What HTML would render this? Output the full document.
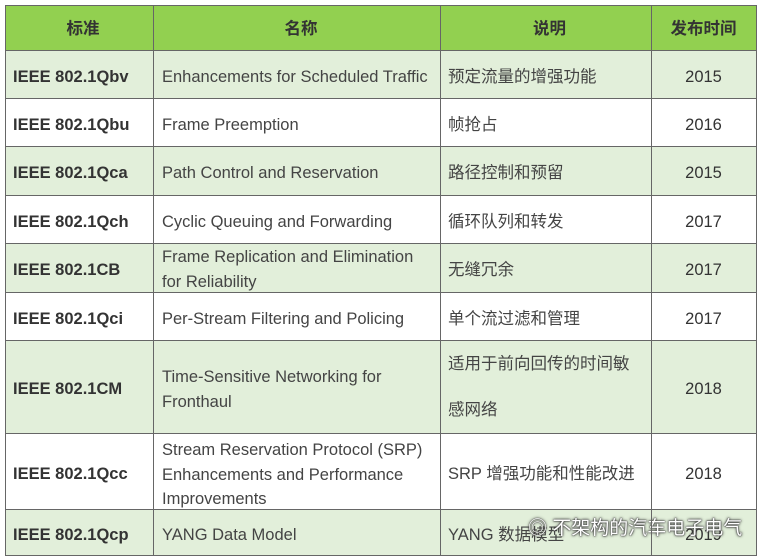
<!DOCTYPE html>
<html><head><meta charset="utf-8"><style>
html,body{margin:0;padding:0;background:#fff;width:760px;height:559px;overflow:hidden}
body{font-family:"Liberation Sans","Noto Sans CJK SC",sans-serif;position:relative}
.r{position:absolute;left:5px;width:751px}
.c{position:absolute;top:3px;bottom:-3px;display:flex;align-items:center;font-size:16.5px;color:#444;box-sizing:border-box;line-height:24.5px;white-space:nowrap}
.l{position:absolute;background:#666}
.h .c{font-weight:bold;color:#333;justify-content:center;top:2px;bottom:-2px}
.c1{left:0;width:148px;padding-left:8px;font-weight:bold;color:#333}
.c2{left:148px;width:287px;padding-left:9px}
.c3{left:435px;width:211px;padding-left:8px}
.c4{left:646px;width:105px;justify-content:center;color:#333}
.g{background:#e2efda}
</style></head><body>
<div class="r h" style="top:5px;height:45px;background:#92d050"><div class="c c1">标准</div><div class="c c2">名称</div><div class="c c3">说明</div><div class="c c4">发布时间</div></div>
<div class="r g" style="top:50px;height:48px"><div class="c c1">IEEE 802.1Qbv</div><div class="c c2">Enhancements for Scheduled Traffic</div><div class="c c3">预定流量的增强功能</div><div class="c c4">2015</div></div>
<div class="r" style="top:98px;height:48px"><div class="c c1">IEEE 802.1Qbu</div><div class="c c2">Frame Preemption</div><div class="c c3">帧抢占</div><div class="c c4">2016</div></div>
<div class="r g" style="top:146px;height:49px"><div class="c c1">IEEE 802.1Qca</div><div class="c c2">Path Control and Reservation</div><div class="c c3">路径控制和预留</div><div class="c c4">2015</div></div>
<div class="r" style="top:195px;height:48px"><div class="c c1">IEEE 802.1Qch</div><div class="c c2">Cyclic Queuing and Forwarding</div><div class="c c3">循环队列和转发</div><div class="c c4">2017</div></div>
<div class="r g" style="top:243px;height:49px"><div class="c c1">IEEE 802.1CB</div><div class="c c2" style="top:2px;bottom:-2px">Frame Replication and Elimination<br>for Reliability</div><div class="c c3">无缝冗余</div><div class="c c4">2017</div></div>
<div class="r" style="top:292px;height:48px"><div class="c c1">IEEE 802.1Qci</div><div class="c c2">Per-Stream Filtering and Policing</div><div class="c c3">单个流过滤和管理</div><div class="c c4">2017</div></div>
<div class="r g" style="top:340px;height:93px"><div class="c c1">IEEE 802.1CM</div><div class="c c2">Time-Sensitive Networking for<br>Fronthaul</div><div class="c c3" style="line-height:46px;top:0;bottom:0">适用于前向回传的时间敏<br>感网络</div><div class="c c4">2018</div></div>
<div class="r" style="top:433px;height:76px"><div class="c c1">IEEE 802.1Qcc</div><div class="c c2" style="top:4px;bottom:-4px">Stream Reservation Protocol (SRP)<br>Enhancements and Performance<br>Improvements</div><div class="c c3">SRP 增强功能和性能改进</div><div class="c c4">2018</div></div>
<div class="r g" style="top:509px;height:46px"><div class="c c1">IEEE 802.1Qcp</div><div class="c c2">YANG Data Model</div><div class="c c3">YANG 数据模型</div><div class="c c4">2019</div></div>
<div style="position:absolute;left:528px;top:513px;font-size:19px;color:#fff;text-shadow:0 0 2px #333,0 0 1px #222,0 0 3px #555">◎ 不架构的汽车电子电气</div>
<div class="l" style="left:5px;top:5px;width:751px;height:1px"></div>
<div class="l" style="left:5px;top:50px;width:751px;height:1px"></div>
<div class="l" style="left:5px;top:98px;width:751px;height:1px"></div>
<div class="l" style="left:5px;top:146px;width:751px;height:1px"></div>
<div class="l" style="left:5px;top:195px;width:751px;height:1px"></div>
<div class="l" style="left:5px;top:243px;width:751px;height:1px"></div>
<div class="l" style="left:5px;top:292px;width:751px;height:1px"></div>
<div class="l" style="left:5px;top:340px;width:751px;height:1px"></div>
<div class="l" style="left:5px;top:433px;width:751px;height:1px"></div>
<div class="l" style="left:5px;top:509px;width:751px;height:1px"></div>
<div class="l" style="left:5px;top:555px;width:751px;height:1px"></div>
<div class="l" style="left:5px;top:5px;width:1px;height:551px"></div>
<div class="l" style="left:153px;top:5px;width:1px;height:551px"></div>
<div class="l" style="left:440px;top:5px;width:1px;height:551px"></div>
<div class="l" style="left:651px;top:5px;width:1px;height:551px"></div>
<div class="l" style="left:756px;top:5px;width:1px;height:551px"></div>
</body></html>
